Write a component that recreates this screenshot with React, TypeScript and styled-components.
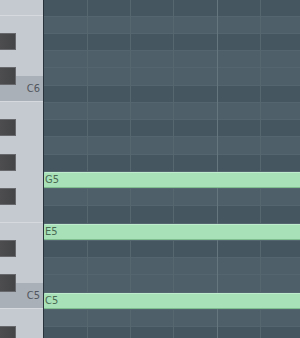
import styled, { createGlobalStyle } from 'styled-components'

// Piano roll geometry

const ROW = 17.25
const BEAT = 43.25
const NAMES = ['C', 'C#', 'D', 'D#', 'E', 'F', 'F#', 'G', 'G#', 'A', 'A#', 'B']
const D_MAJOR = [1, 2, 4, 6, 7, 9, 11]
const TOP_NOTE = 77 // F6
const BOTTOM_NOTE = 58 // A#4
const NOTES = [67, 64, 60] // G5, E5, C5

const noteName = (n: number) => `${NAMES[n % 12]}${Math.floor(n / 12)}`
const isBlack = (n: number) => NAMES[n % 12].includes('#')

const rows: number[] = []
for (let n = TOP_NOTE; n >= BOTTOM_NOTE; n--) rows.push(n)

// white keys from the top, height in rows
const WHITE_KEYS = [77, 76, 74, 72, 71, 69, 67, 65, 64, 62, 60, 59, 57]
const whiteSpan = (n: number) => ([0, 4, 5, 11].includes(n % 12) ? 1.5 : 2)

// Styled components

const GlobalStyle = createGlobalStyle`
  html, body {
    margin: 0;
    padding: 0;
    background: #475761;
    overflow: hidden;
  }
`

const PianoRoll = styled.div`
  display: flex;
  width: 300px;
  height: 338px;
  overflow: hidden;
  font-family: 'Liberation Sans Narrow', 'DejaVu Sans Condensed', 'Liberation Sans', sans-serif;
`

const Keyboard = styled.div`
  position: relative;
  flex-shrink: 0;
  width: 43px;
  border-right: 1px solid #27323a;
  overflow: hidden;
  background: #c5cad1;
`

const WhiteKeyColumn = styled.div`
  display: flex;
  flex-direction: column;
  margin-top: ${-1.75 - ROW / 2}px;
`

const WhiteKey = styled.div<{ $span: number; $c: boolean; $edge: boolean }>`
  box-sizing: border-box;
  flex-shrink: 0;
  height: ${(p) => p.$span * ROW}px;
  display: flex;
  align-items: center;
  justify-content: flex-end;
  padding-right: 3px;
  background: ${(p) => (p.$c ? '#aab0b7' : '#c5cad1')};
  border-bottom: ${(p) => (p.$edge ? '1px solid #d6dadf' : 'none')};
  font-size: 11px;
  color: #51565e;
`

const BlackKey = styled.div<{ $index: number }>`
  position: absolute;
  left: 0;
  top: ${(p) => -1.75 + p.$index * ROW}px;
  box-sizing: border-box;
  width: 16px;
  height: ${ROW}px;
  background: linear-gradient(to right, #4d4d50, #444547);
  border: 1px solid #67686b;
  border-left: none;
`

const Grid = styled.div`
  position: relative;
  flex: 1;
  overflow: hidden;
`

const GridRows = styled.div`
  display: flex;
  flex-direction: column;
  margin-top: -1.75px;
`

const GridRow = styled.div<{ $dark: boolean }>`
  box-sizing: border-box;
  display: flex;
  flex-shrink: 0;
  height: ${ROW}px;
  border-top: 1px solid #55656f;
  background: ${(p) => (p.$dark ? '#465660' : '#4e5f69')};
`

const Note = styled.div`
  position: relative;
  z-index: 2;
  flex: 1;
  display: flex;
  align-items: center;
  box-sizing: border-box;
  padding-left: 1px;
  background: #a8e1b8;
  border-top: 1px solid #bfeccc;
  border-bottom: 1px solid #80be90;
  border-radius: 1px 0 0 1px;
  font-size: 11px;
  color: #4b6a53;
`

const BeatLine = styled.div<{ $x: number; $bar: boolean }>`
  position: absolute;
  z-index: 1;
  top: 0;
  bottom: 0;
  left: ${(p) => p.$x}px;
  width: 1px;
  background: ${(p) => (p.$bar ? '#66767f' : '#57676f')};
`

export default function App() {
  return (
    <>
      <GlobalStyle />
      <PianoRoll>
        <Keyboard>
          <WhiteKeyColumn>
            {WHITE_KEYS.map((n) => {
              const c = n % 12 === 0
              return (
                <WhiteKey key={n} $span={whiteSpan(n)} $c={c} $edge={c || n % 12 === 5}>
                  {c ? noteName(n) : null}
                </WhiteKey>
              )
            })}
          </WhiteKeyColumn>
          {rows.map((n, i) => (isBlack(n) ? <BlackKey key={n} $index={i} /> : null))}
        </Keyboard>
        <Grid>
          <GridRows>
            {rows.map((n) => (
              <GridRow key={n} $dark={!D_MAJOR.includes(n % 12)}>
                {NOTES.includes(n) && <Note>{noteName(n)}</Note>}
              </GridRow>
            ))}
          </GridRows>
          {[1, 2, 3, 4, 5].map((k) => (
            <BeatLine key={k} $x={Math.floor(k * BEAT)} $bar={k % 4 === 0} />
          ))}
        </Grid>
      </PianoRoll>
    </>
  )
}
